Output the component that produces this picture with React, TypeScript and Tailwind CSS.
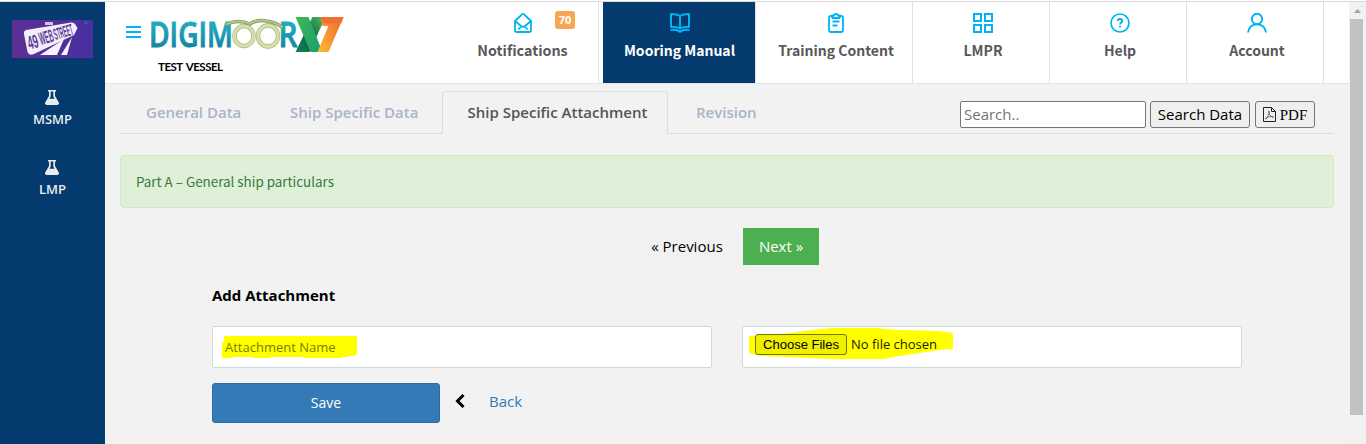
import React from "react";

const NAV_FONT = "font-['Noto_Sans_CJK_SC',sans-serif]";

function FlaskIcon() {
  return (
    <svg width="14" height="15" viewBox="0 0 14 15" className="block">
      <path fill="#e9ecef" fillRule="evenodd" d="M3 0h8v1.500h-1V6l3.700 6.200c.8 1.500 0 2.800-1.500 2.800H1.800C.3 15-.5 13.700.3 12.200L4 6V1.500H3zM5.700 1.500v5L4.400 8.800h5.200L8.300 6.500v-5z" />
    </svg>
  );
}

function StreetLogo() {
  return (
    <svg width="81" height="38" viewBox="0 0 81 38" className="block">
      <defs>
        <linearGradient id="violet" x1="0" x2="1">
          <stop offset="0" stopColor="#5b2f94" />
          <stop offset="1" stopColor="#4a2fa0" />
        </linearGradient>
      </defs>
      <rect width="81" height="38" fill="url(#violet)" />
      <circle cx="74" cy="2.500" r="2" fill="#2f55b4" />
      <path d="M33 2h8v3h-8z" fill="#cfc3e8" />
      <path d="M14 10L59 2.500Q62 2.300 63 4L65.500 8 62 15 22 34Q17 36 15.500 32L12 14Q11.500 11 14 10Z" fill="#f3effa" />
      <path d="M28 35L52 19 45 35zM49 35L60 17 55 35z" fill="#f7f4fc" />
      <g fontWeight="700" fontFamily="'Liberation Sans',sans-serif" fill="#5b3c98">
        <text transform="translate(17.500 29.500) rotate(-15) scale(.5 1)" fontSize="19">49</text>
        <text transform="translate(29 25) rotate(-16) scale(.34 1)" fontSize="18">WEB</text>
        <text transform="translate(43.500 20) rotate(-17) scale(.31 1)" fontSize="16">STREET</text>
      </g>
    </svg>
  );
}

function DigimoorLogo() {
  return (
    <svg width="195" height="38" viewBox="0 0 195 38" className="block overflow-visible">
      <defs>
        <linearGradient id="teal" x1="0" y1="0" x2="0" y2="1">
          <stop offset="0" stopColor="#22b9c9" />
          <stop offset=".55" stopColor="#1999b2" />
          <stop offset="1" stopColor="#127692" />
        </linearGradient>
        <linearGradient id="green" x1="0" y1="0" x2="1" y2="1">
          <stop offset="0" stopColor="#3fb65c" />
          <stop offset="1" stopColor="#17a06a" />
        </linearGradient>
        <linearGradient id="dark" x1="0" y1="1" x2="1" y2="0">
          <stop offset="0" stopColor="#138158" />
          <stop offset=".45" stopColor="#0a6644" />
          <stop offset="1" stopColor="#58bd60" />
        </linearGradient>
        <linearGradient id="orange" x1="1" y1="0" x2="0" y2="1">
          <stop offset="0" stopColor="#ee6a30" />
          <stop offset=".45" stopColor="#f58a34" />
          <stop offset="1" stopColor="#fbbe2c" />
        </linearGradient>
      </defs>
      <g fontFamily="'Open Sans',sans-serif" fontWeight="600" fontSize="34" fill="url(#teal)" stroke="url(#teal)" strokeWidth=".9">
        <text x="-1" y="30.500" textLength="84" lengthAdjust="spacingAndGlyphs">DIGIM</text>
        <text x="128.500" y="30.500" textLength="19" lengthAdjust="spacingAndGlyphs">R</text>
      </g>
      <g fill="none" strokeLinecap="round">
        <ellipse cx="94" cy="20" rx="9.500" ry="10" stroke="#a5b47b" strokeWidth="4.400" />
        <ellipse cx="118" cy="20" rx="10" ry="10.500" stroke="#a5b47b" strokeWidth="4.400" />
        <ellipse cx="94" cy="20" rx="9.500" ry="10" stroke="#d5dfab" strokeWidth="3.200" strokeDasharray="2.500 .6" />
        <ellipse cx="118" cy="20" rx="10" ry="10.500" stroke="#d5dfab" strokeWidth="3.200" strokeDasharray="2.500 .6" />
        <path d="M77 8Q88 3 100 8Q107 3 116 5Q125 6 132 11" stroke="#84955d" strokeWidth="3.400" />
        <path d="M77 8Q88 3 100 8Q107 3 116 5Q125 6 132 11" stroke="#b5c38b" strokeWidth="2" strokeDasharray="2.500 1" />
      </g>
      <g transform="translate(2.500 0)">
        <path d="M160 1H173L157 36H143z" fill="url(#dark)" />
        <path d="M143 1H156L170 36H158z" fill="url(#green)" />
        <path d="M168 1H191L176 36H165L176 10H170z" fill="url(#orange)" />
        <path d="M168 1H191L189 7H171z" fill="#ee7131" />
      </g>
    </svg>
  );
}

function EnvelopeIcon() {
  return (
    <svg width="18" height="20" viewBox="0 0 18 20" fill="none" stroke="#00b4f4" strokeWidth="1.800" strokeLinejoin="round" className="block">
      <path d="M1 8L8 1.300Q9 .6 10 1.300L17 8V17.500Q17 19 15.500 19H2.500Q1 19 1 17.500zM1 8L7 13Q9 14.500 11 13L17 8M4.500 16.500L7 13.500M13.500 16.500L11 13.500" />
    </svg>
  );
}
function BookIcon() {
  return (
    <svg width="20" height="20" viewBox="0 0 20 20" fill="none" stroke="#00b4f4" strokeWidth="2" strokeLinejoin="round" className="block">
      <path d="M10 3Q7 1 1 1V14Q7 13.700 10 15.300 13 13.700 19 14V1Q13 1 10 3zM10 3V15M.5 17Q6 16.300 8 17.800H12Q14 16.300 19.500 17M8 18Q10 19.500 12 18" />
    </svg>
  );
}
function ClipboardIcon() {
  return (
    <svg width="16" height="20" viewBox="0 0 16 20" fill="none" stroke="#00b4f4" strokeWidth="1.800" className="block">
      <path d="M4 3H3Q1 3 1 5V17Q1 19 3 19H13Q15 19 15 17V5Q15 3 13 3H12M4.500 2.500H6Q6.300 1 8 1T10 2.500H11.500V5H4.500zM4.500 8.500H11.500M4.500 12.500H9.500" />
    </svg>
  );
}
function GridIcon() {
  return (
    <svg width="20" height="20" viewBox="0 0 20 20" fill="none" stroke="#00b4f4" strokeWidth="2" className="block">
      <path d="M1 1H8V8H1zM12 1H19V8H12zM1 12H8V19H1zM12 12H19V19H12z" />
    </svg>
  );
}
function HelpIcon() {
  return (
    <svg width="20" height="20" viewBox="0 0 20 20" fill="none" stroke="#00b4f4" className="block">
      <circle cx="10" cy="10" r="9" strokeWidth="1.700" />
      <path strokeWidth="1.900" d="M7.700 8Q7.700 6 10 6T12.300 8C12.300 9.500 10 9.500 10 11.500M10 12.700V14.500" />
    </svg>
  );
}
function UserIcon() {
  return (
    <svg width="20" height="20" viewBox="0 0 20 20" fill="none" stroke="#00b4f4" strokeWidth="1.900" className="block">
      <circle cx="10" cy="6" r="5.200" />
      <path d="M1 19.500C2 8.500 18 8.500 19 19.500" />
    </svg>
  );
}

interface NavProps {
  icon: React.ReactNode;
  label: string;
  cell: string;
  text: string;
}
function NavItem({ icon, label, cell, text }: NavProps) {
  return (
    <a className={`flex h-[81px] shrink-0 flex-col items-center pt-[11px] ${cell}`}>
      <span className="flex h-5 items-center">{icon}</span>
      <span className={`mt-[5px] leading-6 font-bold whitespace-nowrap ${NAV_FONT} ${text}`}>{label}</span>
    </a>
  );
}

export default function App() {
  return (
    <div className="flex h-[444px] w-[1366px] flex-col overflow-hidden bg-[#f2f2f2] font-['Open_Sans',sans-serif] text-black">
      <div className="h-[2px] shrink-0 border-b border-[#dadada] bg-white" />
      <div className="flex min-h-0 flex-1">
        <aside className="flex w-[105px] shrink-0 flex-col items-center bg-[#043a6d] text-[13px] leading-[18px] font-semibold text-[#e9ecef]">
          <div className="mt-[18px] mr-px"><StreetLogo /></div>
          <div className="mt-8 flex flex-col items-center"><FlaskIcon /><span className="mt-[5px]">MSMP</span></div>
          <div className="mt-[32px] flex flex-col items-center"><FlaskIcon /><span className="mt-[5px]">LMP</span></div>
        </aside>

        <div className="flex w-[1244px] shrink-0 flex-col">
          <header className="flex h-[82px] shrink-0 border-b border-[#e4e4e4] bg-white">
            <div className="flex w-[342px] shrink-0 pl-[21px]">
              <svg width="15" height="12" viewBox="0 0 15 12" className="mt-6 block shrink-0" fill="#00b4f4">
                <path d="M0 0h15v2H0zM0 5h15v2H0zM0 10h15v2H0z" />
              </svg>
              <div className="ml-[9px] flex flex-col pt-[14px]">
                <DigimoorLogo />
                <span className="mt-[5px] ml-[8px] font-['Lato',sans-serif] text-[11.500px] leading-4 font-bold tracking-[-0.5px] [word-spacing:1.500px]">TEST VESSEL</span>
              </div>
            </div>
            <div className="relative">
              <NavItem icon={<EnvelopeIcon />} label="Notifications" cell="w-[152px] border-r border-[#e0e0e0]" text="text-[14.300px] text-[#58595b]" />
              <span className="absolute top-[9px] left-[108px] h-[18px] w-5 rounded-[3px] bg-[#f9a654] text-center text-[11px] leading-[18px] font-bold text-white">70</span>
            </div>
            <NavItem icon={<BookIcon />} label="Mooring Manual" cell="ml-1 w-[152px] bg-[#043a6d] pl-px" text="text-[14px] text-white" />
            <NavItem icon={<ClipboardIcon />} label="Training Content" cell="w-[158px] border-x border-[#e0e0e0] pl-1" text="text-[14px] text-[#58595b]" />
            <NavItem icon={<GridIcon />} label="LMPR" cell="w-[137px] border-r border-[#e0e0e0] pl-1" text="text-[14px] text-[#58595b]" />
            <NavItem icon={<HelpIcon />} label="Help" cell="w-[137px] border-r border-[#e0e0e0] pl-1" text="text-[14px] text-[#58595b]" />
            <NavItem icon={<UserIcon />} label="Account" cell="w-[137px] border-r border-[#e0e0e0] pl-1" text="text-[14px] text-[#58595b]" />
          </header>

          <main className="flex flex-col px-[15px]">
            <div className="mt-[7px] flex h-[43px] text-[15px] leading-[20px] font-semibold text-[#a9b4c8]">
              <div className="w-[144px] border-b border-[#dcdddf] pt-[11px] pl-[26px]">General Data</div>
              <div className="w-[178px] border-b border-[#dcdddf] pt-[11px] pl-[26px]">Ship Specific Data</div>
              <div className="w-[226px] rounded-t border border-b-0 border-[#dcdddf] pt-[10px] pl-[5px] text-center text-[#555]">Ship Specific Attachment</div>
              <div className="w-[292px] border-b border-[#dcdddf] pt-[11px] pl-7">Revision</div>
              <div className="flex flex-1 gap-1 border-b border-[#dcdddf] pt-[10px] font-normal text-black">
                <input placeholder="Search.." className="h-[27px] w-[186px] rounded-[2px] border border-[#767676] bg-white px-[3px] pb-[2px] placeholder:text-[#757575]" />
                <button className="h-[27px] w-[100px] rounded-[3px] border border-[#767676] bg-[#efefef] pb-[2px] whitespace-nowrap">Search Data</button>
                <button className="ml-px flex h-[27px] w-[60px] items-center justify-center gap-1 rounded-[3px] border border-[#767676] bg-[#efefef] font-['Liberation_Serif',serif]">
                  <svg width="13" height="15" viewBox="0 0 13 15" fill="none" stroke="#222" className="block">
                    <path d="M.5.5H8.500L12.500 4.500V14.500H.5zM8.500.5V4.500H12.500" />
                    <path strokeWidth=".8" stroke="#555" d="M5.500 4C7 4 5.500 9 3 12Q1.500 12.500 3 11 6 9 10 9.500 11 10.500 9 10.300 6 8 5.500 4z" />
                  </svg>
                  <span>PDF</span>
                </button>
              </div>
            </div>

            <div className="mt-[21px] h-[53px] rounded border border-[#d0e9c0] bg-[#dff0d8] pt-[13px] pl-[15px] font-['Noto_Sans_CJK_SC',sans-serif] text-[13.400px] leading-6 text-[#3c763d]">Part A – General ship particulars</div>

            <div className="mt-5 flex h-[37px] justify-center gap-1 text-[15px] leading-[37px]">
              <button className="w-[104px] bg-[#f1f1f1]">« Previous</button>
              <button className="w-[76px] bg-[#4caf50] text-white">Next »</button>
            </div>

            <section className="ml-[92px] w-[1030px]">
              <h3 className="mt-[19px] text-[15px] leading-[22px] font-bold">Add Attachment</h3>
              <div className="mt-[20px] flex gap-[30px]">
                <div className="relative h-[42px] w-[500px] rounded-[2px] border border-[#cddbdc] bg-white">
                  <svg width="136" height="23" viewBox="0 0 136 23" className="absolute top-[9px] left-[9px]" fill="#ff0">
                    <path d="M2 0H135V17L133 20H128L126 21H120V22H82V21H48V22H31V21H10V22H0V6H2z" />
                  </svg>
                  <span className="relative block pl-3 text-[13px] leading-[41px] text-[#7c7c00]">Attachment Name</span>
                </div>
                <div className="relative flex h-[42px] w-[500px] items-start rounded-[2px] border border-[#cddbdc] bg-white pt-[7px] pl-3 text-[13px]">
                  <svg width="205" height="32" viewBox="0 0 205 32" className="absolute top-px left-[6px]" fill="#ff0">
                    <path d="M0 8H9L42 5 54 3 82 0H126L150 2 190 3 204 5V21L190 22 177 24 150 28 135 31H82L60 30 38 29 13 28 0 25z" />
                  </svg>
                  <button className="relative h-[21px] w-[92px] rounded-[3px] border border-[#767600] bg-[#efef00] font-['Liberation_Sans',sans-serif] leading-[18px]">Choose Files</button>
                  <span className="relative ml-[4px] leading-[21px] text-[#222200]">No file chosen</span>
                </div>
              </div>
              <div className="mt-[15px] flex h-10 items-center">
                <button className="h-10 w-[228px] rounded-[3px] border border-[#2e6da4] bg-[#337ab7] pb-[2px] text-[14px] text-white">Save</button>
                <svg width="10" height="14" viewBox="0 0 10 14" className="mb-[4px] ml-[15px]" fill="none" stroke="#000" strokeWidth="3">
                  <path d="M8.500 1L2.500 7 8.500 13" />
                </svg>
                <a className="mb-[4px] ml-6 text-[15px] text-[#337ab7]">Back</a>
              </div>
            </section>
          </main>
        </div>

        <div className="flex w-[17px] shrink-0 flex-col items-center bg-[#f1f1f1]">
          <svg width="7" height="4" viewBox="0 0 7 4" className="mt-[7px] mb-[6px] shrink-0" fill="#a3a3a3"><path d="M0 4L3.500 0 7 4z" /></svg>
          <div className="mr-[2px] h-[396px] w-[13px] bg-[#c1c1c1]" />
        </div>
      </div>
    </div>
  );
}
